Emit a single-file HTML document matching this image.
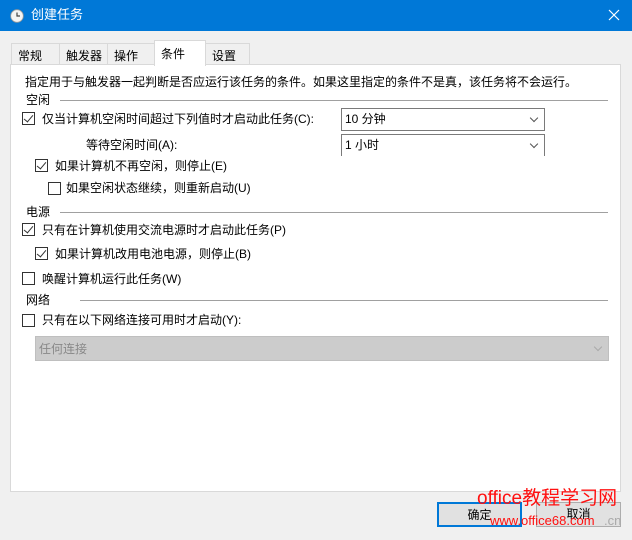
<!DOCTYPE html>
<html><head><meta charset="utf-8"><style>
*{margin:0;padding:0;box-sizing:border-box}
body{width:632px;height:540px;background:#f0f0f0;font-family:"Liberation Sans","Noto Sans CJK SC",sans-serif;font-size:12px;color:#000;position:relative;overflow:hidden}
.a{position:absolute;white-space:nowrap;line-height:14px}
.title{position:absolute;left:0;top:0;width:632px;height:31px;background:#0078d7;color:#fff}
.panel{position:absolute;left:10px;top:64px;width:611px;height:428px;background:#fff;border:1px solid #d9d9d9}
.tab{position:absolute;top:43px;height:22px;border:1px solid #d9d9d9;border-bottom:none;background:#f0f0f0;padding:3px 0 0 6px;font-size:12px}
.cb{position:absolute;width:13px;height:13px;border:1px solid #333;background:#fff}
.cb.c::after{content:"";position:absolute;left:3px;top:0px;width:4px;height:8px;border:solid #333;border-width:0 1.3px 1.3px 0;transform:rotate(40deg)}
.line{position:absolute;height:1px;background:#a0a0a0}
.combo{position:absolute;border:1px solid #7a7a7a;background:#fff;padding:3px 0 0 3px;line-height:14px}
.chev{position:absolute;right:7px;top:6px;width:6px;height:6px;border:solid #555;border-width:0 1px 1px 0;transform:rotate(45deg)}
.btn{position:absolute;top:502px;height:25px;background:#e1e1e1;border:1px solid #adadad;text-align:center;line-height:22px}
</style></head><body>
<div class="title">
<svg style="position:absolute;left:10px;top:9px" width="14" height="14" viewBox="0 0 14 14"><circle cx="7" cy="7" r="6.3" fill="#f4f4f4" stroke="#999" stroke-width=".8"/><path d="M7 3.5V7h3" stroke="#444" stroke-width="1.2" fill="none"/></svg>
<div class="a" style="left:31px;top:8px;font-size:13px">创建任务</div>
<svg style="position:absolute;left:608px;top:9px" width="12" height="12"><path d="M1 1L11 11M11 1L1 11" stroke="#fff" stroke-width="1.2"/></svg>
</div>
<div class="tab" style="left:11px;width:49px">常规</div>
<div class="tab" style="left:59px;width:49px">触发器</div>
<div class="tab" style="left:107px;width:48px">操作</div>
<div class="tab" style="left:205px;width:45px">设置</div>
<div class="panel"></div>
<div class="tab" style="left:154px;top:40px;height:26px;width:52px;background:#fff;padding-top:4px">条件</div>

<div class="a" style="left:25px;top:75px">指定用于与触发器一起判断是否应运行该任务的条件。如果这里指定的条件不是真，该任务将不会运行。</div>
<div class="a" style="left:26px;top:93px">空闲</div><div class="line" style="left:60px;top:100px;width:548px"></div>
<div class="cb c" style="left:22px;top:112px"></div><div class="a" style="left:42px;top:112px">仅当计算机空闲时间超过下列值时才启动此任务(C):</div>
<div class="combo" style="left:341px;top:108px;width:204px;height:23px">10 分钟<div class="chev"></div></div>
<div class="a" style="left:86px;top:138px">等待空闲时间(A):</div>
<div class="combo" style="left:341px;top:134px;width:204px;height:22px;border-bottom:none">1 小时<div class="chev"></div></div>
<div class="cb c" style="left:35px;top:159px"></div><div class="a" style="left:55px;top:159px">如果计算机不再空闲，则停止(E)</div>
<div class="cb" style="left:48px;top:182px"></div><div class="a" style="left:66px;top:181px">如果空闲状态继续，则重新启动(U)</div>
<div class="a" style="left:26px;top:205px">电源</div><div class="line" style="left:60px;top:212px;width:548px"></div>
<div class="cb c" style="left:22px;top:223px"></div><div class="a" style="left:42px;top:223px">只有在计算机使用交流电源时才启动此任务(P)</div>
<div class="cb c" style="left:35px;top:247px"></div><div class="a" style="left:55px;top:247px">如果计算机改用电池电源，则停止(B)</div>
<div class="cb" style="left:22px;top:272px"></div><div class="a" style="left:42px;top:272px">唤醒计算机运行此任务(W)</div>
<div class="a" style="left:26px;top:293px">网络</div><div class="line" style="left:80px;top:300px;width:528px"></div>
<div class="cb" style="left:22px;top:314px"></div><div class="a" style="left:42px;top:313px">只有在以下网络连接可用时才启动(Y):</div>
<div class="combo" style="left:35px;top:336px;width:574px;height:25px;background:#cccccc;border-color:#bfbfbf;color:#888;padding-top:5px">任何连接<div class="chev" style="border-color:#aaa;top:7px"></div></div>

<div class="btn" style="left:437px;width:85px;border:2px solid #0078d7">确定</div>
<div class="btn" style="left:536px;width:85px">取消</div>
<div class="a" style="left:477px;top:488px;font-size:19px;line-height:22px;color:#ff1010">office教程学习网</div>
<div class="a" style="left:490px;top:514px;font-size:13px;color:#ff1010">www.office68.com</div>
<div class="a" style="left:604px;top:514px;font-size:13px;color:#aaa">.cn</div>
</body></html>
